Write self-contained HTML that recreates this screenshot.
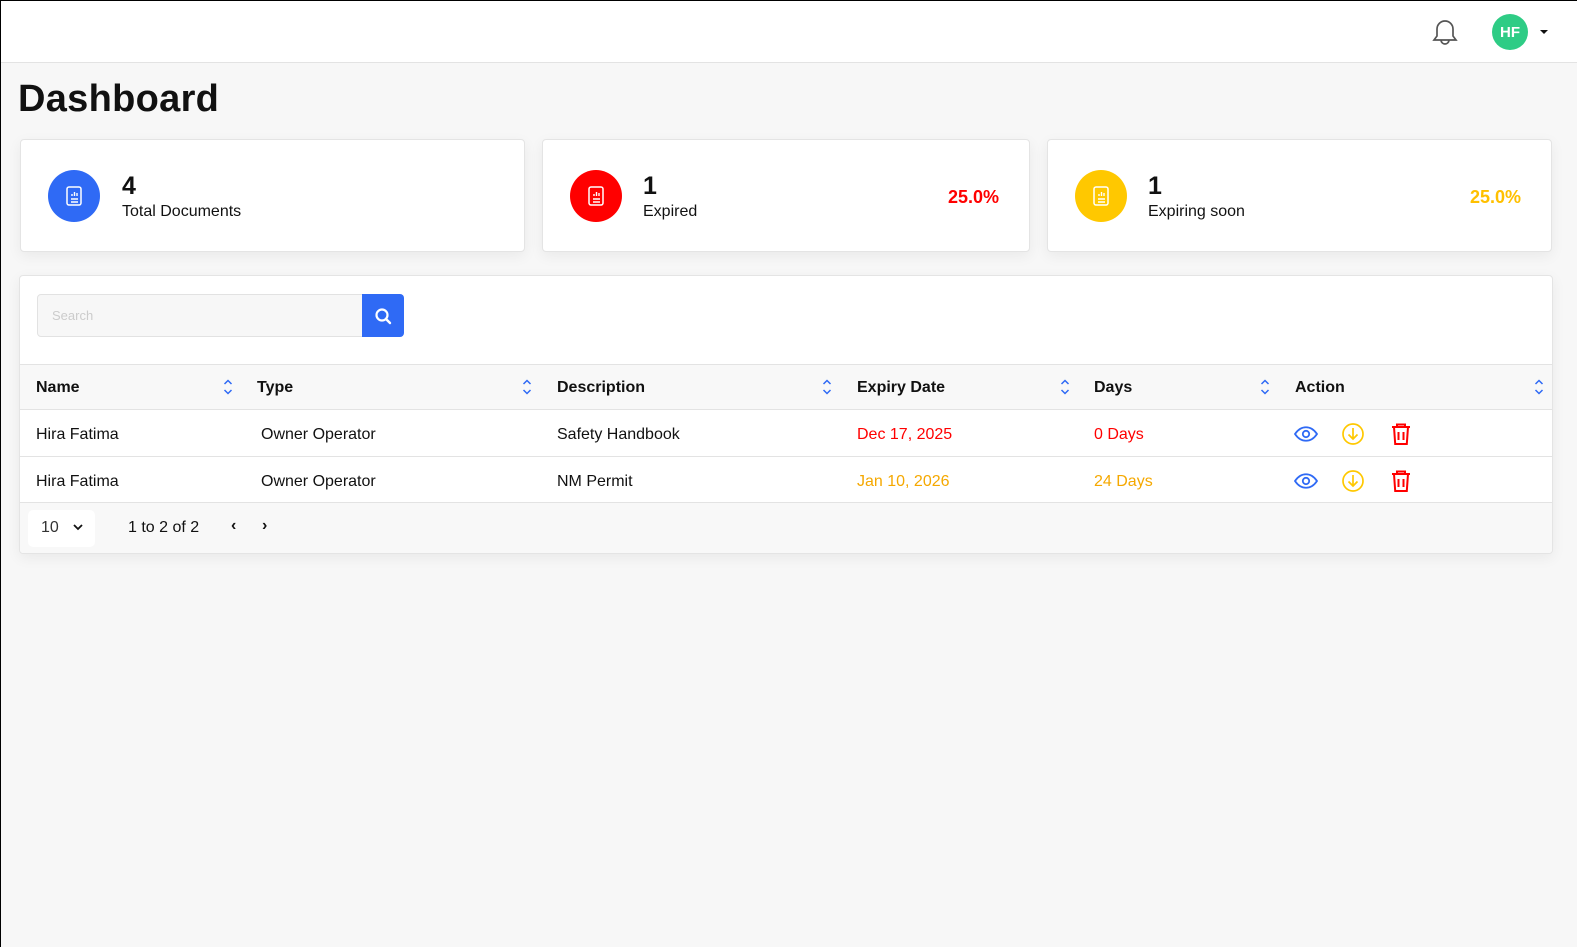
<!DOCTYPE html>
<html style="overflow:hidden"><head><meta charset="utf-8"><style>
*{box-sizing:border-box;margin:0;padding:0}
html{overflow:hidden}
body{width:1577px;height:947px;overflow:hidden;background:#f7f7f7;font-family:"Liberation Sans",sans-serif;color:#111;position:relative}
.frame{position:absolute;left:0;top:0;width:1577px;height:947px;border-left:1px solid #000;border-top:1px solid #000;pointer-events:none;z-index:5}
.abs{position:absolute}
.top{left:0;top:0;width:1577px;height:63px;background:#fff;border-bottom:1px solid #e3e3e3}
.card{background:#fff;border:1px solid #e4e4e4;border-radius:4px;box-shadow:0 4px 14px rgba(0,0,0,.06)}
.circ{width:52px;height:52px;border-radius:50%;display:flex;align-items:center;justify-content:center}
.num{font-size:25px;font-weight:bold}
.lbl{font-size:16px}
.pct{font-size:18px;font-weight:bold}
.th{font-size:16px;font-weight:bold;top:379px}
.td{font-size:16px}
.sort{width:10px;height:18px}
</style></head><body>
<div class="frame"></div>
<div class="abs top"></div>
<svg class="abs" style="left:1431px;top:18px" width="28" height="30" viewBox="0 0 28 30"><path d="M14 3a8 8 0 0 0-8 8v7l-3 4h22l-3-4v-7a8 8 0 0 0-8-8zM10 22a4 4 0 0 0 8 0" fill="none" stroke="#555" stroke-width="1.7"/></svg>
<div class="abs circ" style="left:1492px;top:14px;width:36px;height:36px;background:#2ecc85;color:#fff;font-weight:bold;font-size:15px">HF</div>
<div class="abs" style="left:1540px;top:30px;border:4px solid transparent;border-top:4px solid #111"></div>
<div class="abs" style="left:18px;top:78px;font-size:38px;font-weight:bold;letter-spacing:0.3px">Dashboard</div>

<div class="abs card" style="left:20px;top:139px;width:505px;height:113px"></div>
<div class="abs card" style="left:542px;top:139px;width:488px;height:113px"></div>
<div class="abs card" style="left:1047px;top:139px;width:505px;height:113px"></div>

<div class="abs circ" style="left:48px;top:170px;background:#2f6af5"><svg width="20" height="22" viewBox="0 0 20 22"><rect x="3" y="2" width="14" height="18" rx="2" fill="none" stroke="#fff" stroke-width="1.5"/><path d="M7 14h7M7 17h7M8 11V9M10.5 11V7M13 11V8" stroke="#fff" stroke-width="1.4"/></svg></div>
<div class="abs num" style="left:122px;top:172px">4</div>
<div class="abs lbl" style="left:122px;top:203px">Total Documents</div>

<div class="abs circ" style="left:570px;top:170px;background:#ff0000"><svg width="20" height="22" viewBox="0 0 20 22"><rect x="3" y="2" width="14" height="18" rx="2" fill="none" stroke="#fff" stroke-width="1.5"/><path d="M7 14h7M7 17h7M8 11V9M10.5 11V7M13 11V8" stroke="#fff" stroke-width="1.4"/></svg></div>
<div class="abs num" style="left:643px;top:172px">1</div>
<div class="abs lbl" style="left:643px;top:203px">Expired</div>
<div class="abs pct" style="left:948px;top:187px;color:#ff0000">25.0%</div>

<div class="abs circ" style="left:1075px;top:170px;background:#ffc800"><svg width="20" height="22" viewBox="0 0 20 22"><rect x="3" y="2" width="14" height="18" rx="2" fill="none" stroke="#fff" stroke-width="1.5"/><path d="M7 14h7M7 17h7M8 11V9M10.5 11V7M13 11V8" stroke="#fff" stroke-width="1.4"/></svg></div>
<div class="abs num" style="left:1148px;top:172px">1</div>
<div class="abs lbl" style="left:1148px;top:203px">Expiring soon</div>
<div class="abs pct" style="left:1470px;top:187px;color:#ffc000">25.0%</div>

<div class="abs card" style="left:19px;top:275px;width:1534px;height:279px;overflow:hidden">
 <div class="abs" style="left:0;top:88px;width:100%;height:46px;background:#f8f8f8;border-top:1px solid #e3e3e3;border-bottom:1px solid #e3e3e3"></div>
 <div class="abs" style="left:0;top:180px;width:100%;height:1px;background:#e3e3e3"></div>
 <div class="abs" style="left:0;top:226px;width:100%;height:53px;background:#f8f8f8;border-top:1px solid #e3e3e3"></div>
</div>
<div class="abs" style="left:37px;top:294px;width:326px;height:43px;background:#f7f7f7;border:1px solid #e2e2e2;border-radius:4px 0 0 4px;font-size:13px;color:#ccc;padding:13px 14px">Search</div>
<div class="abs" style="left:362px;top:294px;width:42px;height:43px;background:#2f6af5;border-radius:0 4px 4px 0"><svg width="42" height="43" viewBox="0 0 42 43"><circle cx="20" cy="21" r="5.5" fill="none" stroke="#fff" stroke-width="2.2"/><path d="M24 25l4 4" stroke="#fff" stroke-width="2.4" stroke-linecap="round"/></svg></div>

<div class="abs th" style="left:36px">Name</div>
<div class="abs th" style="left:257px">Type</div>
<div class="abs th" style="left:557px">Description</div>
<div class="abs th" style="left:857px">Expiry Date</div>
<div class="abs th" style="left:1094px">Days</div>
<div class="abs th" style="left:1295px">Action</div>
<svg class="abs sort" style="left:223px;top:378px" viewBox="0 0 10 18"><path d="M1.5 6L5 2.5 8.5 6M1.5 12L5 15.5 8.5 12" fill="none" stroke="#2f6af5" stroke-width="1.5"/></svg>
<svg class="abs sort" style="left:522px;top:378px" viewBox="0 0 10 18"><path d="M1.5 6L5 2.5 8.5 6M1.5 12L5 15.5 8.5 12" fill="none" stroke="#2f6af5" stroke-width="1.5"/></svg>
<svg class="abs sort" style="left:822px;top:378px" viewBox="0 0 10 18"><path d="M1.5 6L5 2.5 8.5 6M1.5 12L5 15.5 8.5 12" fill="none" stroke="#2f6af5" stroke-width="1.5"/></svg>
<svg class="abs sort" style="left:1060px;top:378px" viewBox="0 0 10 18"><path d="M1.5 6L5 2.5 8.5 6M1.5 12L5 15.5 8.5 12" fill="none" stroke="#2f6af5" stroke-width="1.5"/></svg>
<svg class="abs sort" style="left:1260px;top:378px" viewBox="0 0 10 18"><path d="M1.5 6L5 2.5 8.5 6M1.5 12L5 15.5 8.5 12" fill="none" stroke="#2f6af5" stroke-width="1.5"/></svg>
<svg class="abs sort" style="left:1534px;top:378px" viewBox="0 0 10 18"><path d="M1.5 6L5 2.5 8.5 6M1.5 12L5 15.5 8.5 12" fill="none" stroke="#2f6af5" stroke-width="1.5"/></svg>

<div class="abs td" style="left:36px;top:426px">Hira Fatima</div>
<div class="abs td" style="left:261px;top:426px">Owner Operator</div>
<div class="abs td" style="left:557px;top:426px">Safety Handbook</div>
<div class="abs td" style="left:857px;top:426px;color:#ff0000">Dec 17, 2025</div>
<div class="abs td" style="left:1094px;top:426px;color:#ff0000">0 Days</div>
<div class="abs td" style="left:36px;top:473px">Hira Fatima</div>
<div class="abs td" style="left:261px;top:473px">Owner Operator</div>
<div class="abs td" style="left:557px;top:473px">NM Permit</div>
<div class="abs td" style="left:857px;top:473px;color:#f5a800">Jan 10, 2026</div>
<div class="abs td" style="left:1094px;top:473px;color:#f5a800">24 Days</div>

<svg class="abs" style="left:1292px;top:422px" width="120" height="24" viewBox="0 0 120 24"><path d="M3 12c6-9 16-9 22 0c-6 9-16 9-22 0z" fill="none" stroke="#2f6af5" stroke-width="1.8"/><circle cx="14" cy="12" r="3.2" fill="none" stroke="#2f6af5" stroke-width="1.8"/><circle cx="61" cy="12" r="10" fill="none" stroke="#ffc800" stroke-width="1.7"/><path d="M61 6v11M56.5 12.5L61 17l4.5-4.5" fill="none" stroke="#ffc800" stroke-width="1.7"/><path d="M100 5h18M105 5V2.5h8V5M102 5l1.2 17h11.6L116 5M106.5 10v8M111.5 10v8" fill="none" stroke="#ff0000" stroke-width="2"/></svg>
<svg class="abs" style="left:1292px;top:469px" width="120" height="24" viewBox="0 0 120 24"><path d="M3 12c6-9 16-9 22 0c-6 9-16 9-22 0z" fill="none" stroke="#2f6af5" stroke-width="1.8"/><circle cx="14" cy="12" r="3.2" fill="none" stroke="#2f6af5" stroke-width="1.8"/><circle cx="61" cy="12" r="10" fill="none" stroke="#ffc800" stroke-width="1.7"/><path d="M61 6v11M56.5 12.5L61 17l4.5-4.5" fill="none" stroke="#ffc800" stroke-width="1.7"/><path d="M100 5h18M105 5V2.5h8V5M102 5l1.2 17h11.6L116 5M106.5 10v8M111.5 10v8" fill="none" stroke="#ff0000" stroke-width="2"/></svg>

<div class="abs" style="left:28px;top:510px;width:67px;height:37px;background:#fff;border-radius:5px"></div>
<div class="abs td" style="left:41px;top:519px;color:#333">10</div>
<svg class="abs" style="left:72px;top:522px" width="12" height="10" viewBox="0 0 12 10"><path d="M2 3l4 4 4-4" fill="none" stroke="#111" stroke-width="1.8"/></svg>
<div class="abs td" style="left:128px;top:519px">1 to 2 of 2</div>
<div class="abs td" style="left:231px;top:517px;font-weight:bold">‹</div>
<div class="abs td" style="left:262px;top:517px;font-weight:bold">›</div>
</body></html>
